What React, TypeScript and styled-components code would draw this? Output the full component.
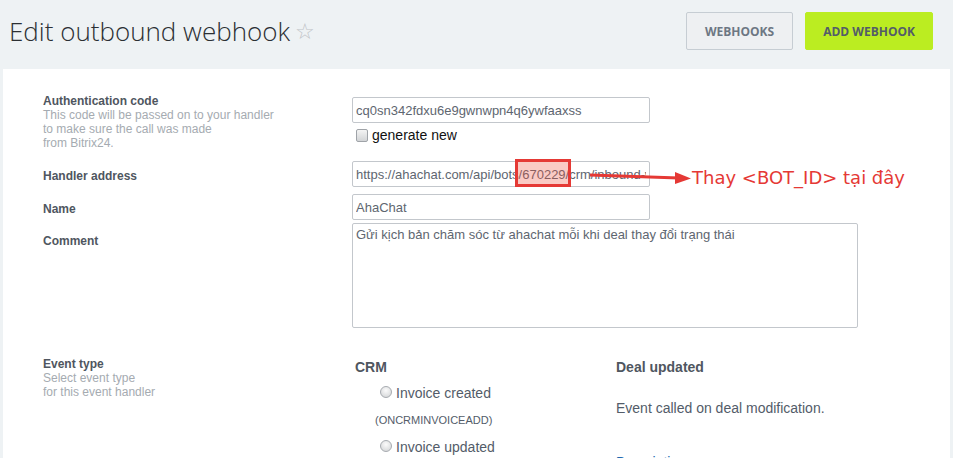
import React from "react";
import styled, { createGlobalStyle } from "styled-components";

const Global = createGlobalStyle`
  html, body { margin: 0; padding: 0; background: #eef2f4; }
  body { font-family: "Liberation Sans", Arial, sans-serif; color: #535c69; }
  * { box-sizing: border-box; }
`;

const Header = styled.header`
  display: flex;
  align-items: center;
  justify-content: space-between;
  padding: 11px 20px 18px 9px;
`;

const Title = styled.h1`
  margin: 0;
  font-family: "Open Sans", sans-serif;
  font-weight: 300;
  font-size: 26px;
  line-height: 38px;
  color: #2b2f33;
  display: flex;
  align-items: center;
  gap: 5px;
`;

const Star = styled.span`
  color: #bfc3c7;
  font-size: 22px;
  font-family: "DejaVu Sans", sans-serif;
  margin-top: 2px;
`;

const Buttons = styled.div`
  display: flex;
  gap: 12px;
`;

const Button = styled.button<{ $primary?: boolean }>`
  height: 38px;
  padding: 0 ${(p) => (p.$primary ? 17 : 18)}px;
  border-radius: 2px;
  border: 1px solid ${(p) => (p.$primary ? "#bbed21" : "#c6cdd3")};
  background: ${(p) => (p.$primary ? "#bbed21" : "#eef0f2")};
  color: ${(p) => (p.$primary ? "#535c69" : "#6d7783")};
  font-family: "Open Sans", sans-serif;
  font-weight: 700;
  font-size: 12px;
`;

const Panel = styled.main`
  margin: 0 3px;
  background: #fff;
  padding: 25px 0 40px 40px;
  min-height: 400px;
`;

const Row = styled.div<{ $mt: number }>`
  display: grid;
  grid-template-columns: 309px auto;
  margin-top: ${(p) => p.$mt}px;
`;

const LabelCol = styled.div<{ $pt: number }>`
  padding-top: ${(p) => p.$pt}px;
  font-size: 12px;
  line-height: 14px;
`;

const LabelTitle = styled.div`
  font-weight: 700;
  color: #4f5660;
`;

const LabelDesc = styled.div`
  color: #a5abb1;
`;

const FieldCol = styled.div<{ $pt?: number }>`
  padding-top: ${(p) => p.$pt ?? 0}px;
  position: relative;
`;

const TextInput = styled.input`
  display: block;
  width: 298px;
  height: 26px;
  padding: 0 3px;
  border: 1px solid #c3c7cc;
  border-radius: 2px;
  font-family: "Liberation Sans", Arial, sans-serif;
  font-size: 13px;
  color: #5e6670;
  background: #fff;
  outline: none;
`;

const TextArea = styled.textarea`
  display: block;
  width: 506px;
  height: 105px;
  padding: 3px 3px;
  border: 1px solid #c3c7cc;
  border-radius: 2px;
  font-family: "Liberation Sans", Arial, sans-serif;
  font-size: 13px;
  line-height: 16px;
  color: #5e6670;
  resize: none;
  outline: none;
`;

const CheckLine = styled.label`
  display: flex;
  align-items: center;
  gap: 4px;
  margin-top: 4px;
  padding-left: 4px;
  font-size: 14px;
  line-height: 16px;
  color: #111;
`;

const CheckBox = styled.span`
  width: 12px;
  height: 13px;
  border: 1px solid #9fa3a8;
  border-radius: 2px;
  background: linear-gradient(#f4f4f4, #d2d4d6);
`;

const Highlight = styled.div`
  position: absolute;
  left: 163px;
  top: -2px;
  width: 56px;
  height: 28px;
  border: 3px solid #e53935;
  background: rgba(240, 80, 60, 0.3);
`;

const Annotation = styled.div`
  position: absolute;
  left: 238px;
  top: 6px;
  display: flex;
  align-items: center;
  pointer-events: none;
`;

const AnnotationText = styled.span`
  font-family: "DejaVu Sans", sans-serif;
  font-size: 18px;
  color: #e53935;
  white-space: nowrap;
  margin-left: 1px;
`;

const EventGrid = styled.div`
  display: grid;
  grid-template-columns: 261px auto;
  padding-left: 3px;
`;

const GroupTitle = styled.div`
  font-weight: 700;
  font-size: 14px;
  line-height: 20px;
  color: #4f5660;
`;

const RadioLine = styled.div<{ $mt: number }>`
  display: flex;
  align-items: center;
  gap: 4px;
  margin-top: ${(p) => p.$mt}px;
  padding-left: 25px;
  font-size: 14px;
  line-height: 20px;
  color: #535c69;
`;

const Radio = styled.span`
  width: 12px;
  height: 12px;
  border-radius: 50%;
  border: 1px solid #a7abb0;
  background: radial-gradient(circle at 50% 35%, #fbfbfb, #d0d2d4);
  margin-top: -2px;
`;

const Code = styled.div`
  padding-left: 20px;
  margin-top: 10px;
  font-size: 11px;
  line-height: 14px;
  color: #535c69;
`;

const EventDesc = styled.div`
  margin-top: 21px;
  font-size: 14px;
  line-height: 20px;
  color: #535c69;
`;

const Link = styled.a`
  display: block;
  margin-top: 34px;
  font-size: 14px;
  line-height: 20px;
  color: #2067b0;
`;

export default function App() {
  return (
    <>
      <Global />
      <Header>
        <Title>
          Edit outbound webhook <Star>☆</Star>
        </Title>
        <Buttons>
          <Button>WEBHOOKS</Button>
          <Button $primary>ADD WEBHOOK</Button>
        </Buttons>
      </Header>
      <Panel>
        <Row $mt={0}>
          <LabelCol $pt={0}>
            <LabelTitle>Authentication code</LabelTitle>
            <LabelDesc>
              This code will be passed on to your handler
              <br />
              to make sure the call was made
              <br />
              from Bitrix24.
            </LabelDesc>
          </LabelCol>
          <FieldCol $pt={3}>
            <TextInput readOnly value="cq0sn342fdxu6e9gwnwpn4q6ywfaaxss" />
            <CheckLine>
              <CheckBox />
              generate new
            </CheckLine>
          </FieldCol>
        </Row>
        <Row $mt={11}>
          <LabelCol $pt={8}>
            <LabelTitle>Handler address</LabelTitle>
          </LabelCol>
          <FieldCol>
            <TextInput readOnly value="https://ahachat.com/api/bots/670229/crm/inbound-webhook" />
            <Highlight />
            <Annotation>
              <svg width="101" height="14" viewBox="0 0 101 14">
                <line x1="0" y1="4" x2="89" y2="7" stroke="#e53935" strokeWidth="3" />
                <polygon points="85,1 101,7.5 85,13" fill="#e53935" />
              </svg>
              <AnnotationText>Thay &lt;BOT_ID&gt; tại đây</AnnotationText>
            </Annotation>
          </FieldCol>
        </Row>
        <Row $mt={7}>
          <LabelCol $pt={8}>
            <LabelTitle>Name</LabelTitle>
          </LabelCol>
          <FieldCol>
            <TextInput readOnly value="AhaChat" />
          </FieldCol>
        </Row>
        <Row $mt={3}>
          <LabelCol $pt={11}>
            <LabelTitle>Comment</LabelTitle>
          </LabelCol>
          <FieldCol>
            <TextArea readOnly value="Gửi kịch bản chăm sóc từ ahachat mỗi khi deal thay đổi trạng thái" />
          </FieldCol>
        </Row>
        <Row $mt={29}>
          <LabelCol $pt={0}>
            <LabelTitle>Event type</LabelTitle>
            <LabelDesc>
              Select event type
              <br />
              for this event handler
            </LabelDesc>
          </LabelCol>
          <EventGrid>
            <div>
              <GroupTitle>CRM</GroupTitle>
              <RadioLine $mt={6}>
                <Radio />
                Invoice created
              </RadioLine>
              <Code>(ONCRMINVOICEADD)</Code>
              <RadioLine $mt={10}>
                <Radio />
                Invoice updated
              </RadioLine>
            </div>
            <div>
              <GroupTitle>Deal updated</GroupTitle>
              <EventDesc>Event called on deal modification.</EventDesc>
              <Link>Description</Link>
            </div>
          </EventGrid>
        </Row>
      </Panel>
    </>
  );
}
